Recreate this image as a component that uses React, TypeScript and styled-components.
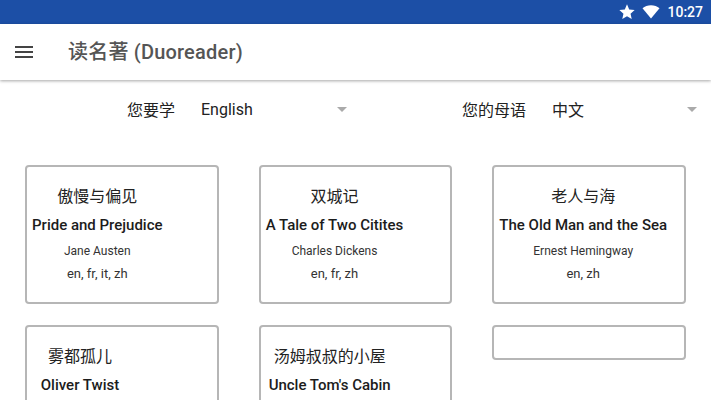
import React from "react";
import styled, { createGlobalStyle } from "styled-components";

const Global = createGlobalStyle`
  html, body { margin: 0; padding: 0; background: #fff; height: 400px; overflow: hidden; }
  body { font-family: Roboto, "Noto Sans CJK SC", sans-serif; }
`;

const Page = styled.div`
  width: 711px;
  height: 400px;
  overflow: hidden;
  display: flex;
  flex-direction: column;
`;

const StatusBar = styled.div`
  height: 24px;
  flex: none;
  background: #1c4fa6;
  color: #fff;
  display: flex;
  align-items: center;
  justify-content: flex-end;
  padding-right: 8px;
  font-size: 14px;
  font-weight: 500;
  gap: 7px;
`;

const Toolbar = styled.header`
  height: 56px;
  flex: none;
  background: #fff;
  display: flex;
  align-items: center;
  padding-left: 15px;
  gap: 36px;
  box-shadow: 0 1px 3px rgba(0, 0, 0, 0.35);
  color: #555;
  position: relative;
`;

const Title = styled.h1`
  margin: 0 0 0 -1px;
  font-size: 20px;
  font-weight: 500;
  letter-spacing: 0.2px;
  line-height: 56px;
`;

const Selectors = styled.div`
  display: grid;
  grid-template-columns: 335px 235px;
  padding: 17px 0 0 127px;
  height: 24px;
  flex: none;
`;

const Selector = styled.div`
  display: flex;
  align-items: center;
  font-size: 16px;
  color: #222;
`;

const SelectLabel = styled.span`
  margin-right: 26px;
`;

const SelectBox = styled.div<{ $width: number }>`
  width: ${(p) => p.$width}px;
  display: flex;
  align-items: center;
  justify-content: space-between;
`;

const Arrow = styled.i`
  width: 0;
  height: 0;
  border-left: 5px solid transparent;
  border-right: 5px solid transparent;
  border-top: 5px solid #aaa;
`;

const Grid = styled.main`
  display: grid;
  grid-template-columns: repeat(3, 193.67px);
  column-gap: 40px;
  row-gap: 21px;
  padding: 44px 0 0 25px;
  align-items: start;
`;

const Card = styled.article<{ $short?: boolean }>`
  box-sizing: border-box;
  border: 2px solid #b6b6b6;
  border-radius: 4px;
  padding: 5px;
  height: ${(p) => (p.$short ? "35px" : "139px")};
  display: flex;
  background: #fff;
`;

const CardBody = styled.div<{ $minWidth?: number }>`
  display: flex;
  flex-direction: column;
  align-items: center;
  min-width: ${(p) => p.$minWidth ?? 0}px;
`;

const ChineseTitle = styled.div`
  font-size: 16px;
  line-height: 24px;
  margin-top: 13px;
  color: #222;
`;

const EnglishTitle = styled.div`
  font-size: 15px;
  font-weight: 500;
  line-height: 20px;
  margin-top: 6px;
  color: #1c1c1c;
`;

const Author = styled.div`
  font-size: 12px;
  line-height: 16px;
  margin-top: 8px;
  color: #333;
`;

const Langs = styled.div`
  font-size: 13px;
  line-height: 16px;
  margin-top: 7px;
  color: #333;
`;

const books: { zh: string; en: string; author?: string; langs?: string; minWidth?: number }[] = [
  { zh: "傲慢与偏见", en: "Pride and Prejudice", author: "Jane Austen", langs: "en, fr, it, zh" },
  { zh: "双城记", en: "A Tale of Two Citites", author: "Charles Dickens", langs: "en, fr, zh" },
  { zh: "老人与海", en: "The Old Man and the Sea", author: "Ernest Hemingway", langs: "en, zh" },
  { zh: "雾都孤儿", en: "Oliver Twist", minWidth: 96 },
  { zh: "汤姆叔叔的小屋", en: "Uncle Tom's Cabin", minWidth: 128 },
];

export default function App() {
  return (
    <Page>
      <Global />
      <StatusBar>
        <svg width="16" height="16" viewBox="0 0 24 24" fill="#fff">
          <path d="M12 0.500l3.300 7.700 8.200.8-6.200 5.500 1.800 8L12 18.300l-7.100 4.200 1.800-8L0.500 9l8.200-.8z" />
        </svg>
        <svg width="18" height="14" viewBox="0 0 18 14" fill="#fff">
          <path d="M9 13.500L0.500 3.200C2.800 1.300 5.700 0.300 9 0.300s6.200 1 8.500 2.900z" />
        </svg>
        <span>10:27</span>
      </StatusBar>
      <Toolbar>
        <svg width="18" height="12" viewBox="0 0 18 12" fill="#444">
          <rect width="18" height="2" />
          <rect y="5" width="18" height="2" />
          <rect y="10" width="18" height="2" />
        </svg>
        <Title>读名著 (Duoreader)</Title>
      </Toolbar>
      <Selectors>
        <Selector>
          <SelectLabel>您要学</SelectLabel>
          <SelectBox $width={146}>
            English
            <Arrow />
          </SelectBox>
        </Selector>
        <Selector>
          <SelectLabel>您的母语</SelectLabel>
          <SelectBox $width={145}>
            中文
            <Arrow />
          </SelectBox>
        </Selector>
      </Selectors>
      <Grid>
        {books.map((b) => (
          <Card key={b.en}>
            <CardBody $minWidth={b.minWidth}>
              <ChineseTitle>{b.zh}</ChineseTitle>
              <EnglishTitle>{b.en}</EnglishTitle>
              {b.author && <Author>{b.author}</Author>}
              {b.langs && <Langs>{b.langs}</Langs>}
            </CardBody>
          </Card>
        ))}
        <Card $short />
      </Grid>
    </Page>
  );
}
